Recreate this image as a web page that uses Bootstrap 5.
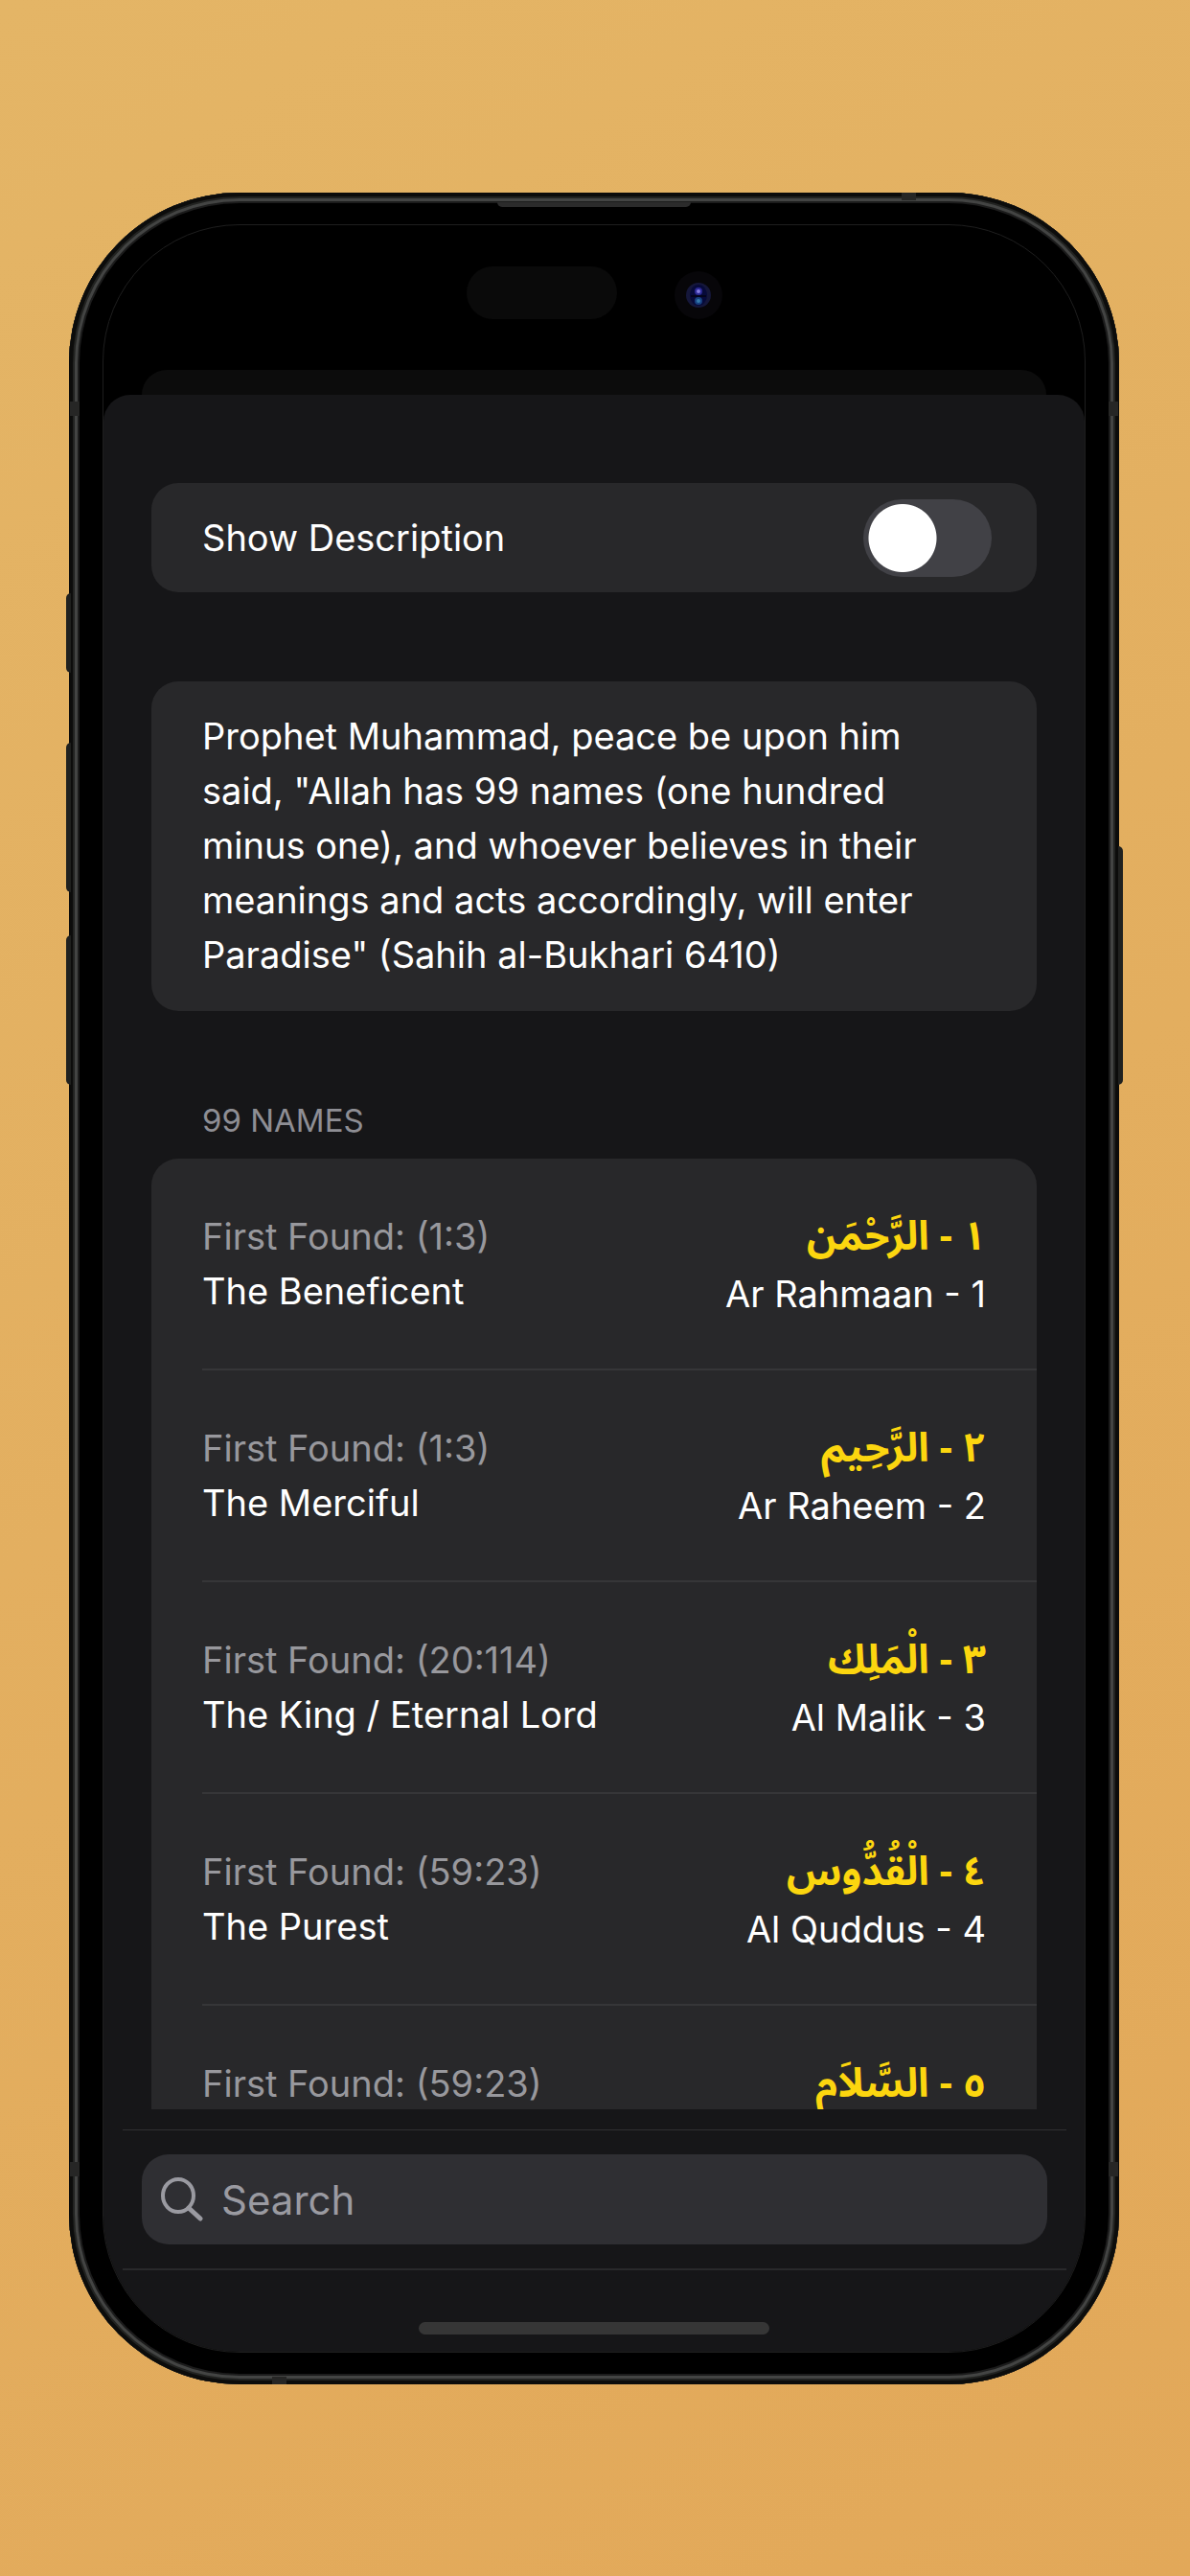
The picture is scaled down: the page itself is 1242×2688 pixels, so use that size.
<!DOCTYPE html>
<html lang="en">
<head>
<meta charset="utf-8">
<meta name="viewport" content="width=device-width, initial-scale=1">
<title>99 Names</title>
<link href="https://cdn.jsdelivr.net/npm/bootstrap@5.3.0/dist/css/bootstrap.min.css" rel="stylesheet">
<style>
  body { font-family: Inter, "Liberation Sans", sans-serif; font-size: 38px; line-height: 57px; color: #fff; background: linear-gradient(145deg, #e4b566, #e2a859); }
  .stage { padding: 201px 74px 200px 72px; }
  .phone { padding: 34px 36px; border-radius: 178px; background: #000;
    box-shadow: inset 0 0 0 4px #0c0c0b, inset 0 0 0 6px #222321, inset 0 0 0 9px #434443, inset 0 0 0 11px #1c1c1c; }
  .side-key { position: absolute; width: 5px; background: #20211f; }
  .key-left { left: -3px; border-radius: 5px 0 0 5px; }
  .key-right { right: -4px; border-radius: 0 5px 5px 0; top: 682px; height: 249px; }
  .key-action { top: 418px; height: 83px; }
  .key-up { top: 574px; height: 156px; }
  .key-down { top: 775px; height: 156px; }
  .band { position: absolute; background: #262625; }
  .band-side { width: 10px; height: 15px; }
  .band-end { width: 15px; height: 8px; }
  .b-l { left: 1px; } .b-r { right: 1px; } .b-hi { top: 218px; } .b-lo { bottom: 217px; }
  .b-top { top: 0; right: 212px; } .b-bot { bottom: 0; left: 212px; }
  .earpiece { position: absolute; top: 10px; left: 50%; margin-left: -101px; width: 202px; height: 5px; background: #2b2b2b; border-radius: 0 0 6px 6px; }
  .screen { border-radius: 142px; background: #000; }
  .screen-edge { position: absolute; inset: -1px; border: 1px solid #1e1e1e; border-radius: 143px; pointer-events: none; }
  .status { height: 151px; padding-top: 43px; gap: 60px; }
  .sensor { width: 157px; height: 55px; border-radius: 28px; background: #0a0a0a; }
  .back-sheet { height: 26px; margin: 0 40px; border-radius: 26px 26px 0 0; background: #0c0c0c; }
  .sheet { background: #161618; border-radius: 28px 28px 0 0; }
  .scroller { padding: 92px 50px 0; }
  .panel { background: #28282a; border-radius: 28px; padding: 0 53px; }
  .toggle-row { height: 114px; padding-right: 47px; margin-bottom: 93px; }
  .form-switch .form-check-input.ios { width: 134px; height: 81px; margin: 0; border: 0; border-radius: 41px; background-color: #414146;
    background-image: radial-gradient(circle closest-side at 41px 50%, #fff 35px, transparent 36px); background-size: 100% 100%; background-position: 0 0; }
  .form-switch .form-check-input.ios:checked { background-color: #34c759; background-image: radial-gradient(circle closest-side at 93px 50%, #fff 35px, transparent 36px); }
  .quote { padding: 29px 53px 30px; margin-bottom: 90px; }
  .section-head { font-size: 33px; line-height: 48px; color: #8e8e94; padding: 0 53px; margin-bottom: 16px; font-weight: 400; }
  .names { padding-right: 0; }
  .name-row { height: 221px; padding: 53px 53px 0 0; border-bottom: 2px solid #363638; }
  .name-row:last-child { border-bottom: 0; }
  .found { color: #98989d; }
  .arabic { font-family: "Noto Sans Arabic", "DejaVu Sans", sans-serif; font-weight: 700; color: #fcd60f; font-size: 42px; }
  .translit { padding-top: 3px; }
  .search-bar { margin: 21px 19px 0 20px; padding: 25px 20px; border-top: 1px solid #303032; border-bottom: 2px solid #29292b; }
  .search-box { height: 94px; border-radius: 28px; background: #2f2f33; padding: 0 20px; gap: 19px; }
  .search-box input, .search-box input:focus { background: transparent; border: 0; box-shadow: none; color: #fff; padding: 0; font-size: 42px; line-height: 57px; }
  .search-box input::placeholder { color: #9a9aa1; opacity: 1; }
  .home { height: 85px; padding-top: 54px; }
  .home-bar { width: 366px; height: 13px; border-radius: 7px; background: #363636; }
</style>
</head>
<body>
<main class="stage vh-100 d-flex">
  <div class="phone flex-grow-1 d-flex position-relative">
    <span class="side-key key-left key-action"></span>
    <span class="side-key key-left key-up"></span>
    <span class="side-key key-left key-down"></span>
    <span class="side-key key-right"></span>
    <span class="band band-side b-l b-hi"></span>
    <span class="band band-side b-r b-hi"></span>
    <span class="band band-side b-l b-lo"></span>
    <span class="band band-side b-r b-lo"></span>
    <span class="band band-end b-top"></span>
    <span class="band band-end b-bot"></span>
    <span class="earpiece"></span>
    <div class="position-relative flex-grow-1 d-flex">
      <div class="screen flex-grow-1 d-flex flex-column overflow-hidden">
        <div class="status flex-shrink-0 d-flex align-items-start justify-content-center">
          <div class="sensor"></div>
          <svg width="50" height="60" viewBox="0 0 50 60" aria-hidden="true">
            <circle cx="25" cy="30" r="25" fill="#070609"/>
            <circle cx="25" cy="30" r="13" fill="#15173a"/>
            <ellipse cx="25" cy="30" rx="9" ry="11" fill="#070a3a"/>
            <circle cx="25" cy="26" r="4" fill="#2d2a96"/>
            <circle cx="25" cy="26" r="2" fill="#857de0"/>
            <circle cx="25" cy="36" r="4" fill="#17407f"/>
            <circle cx="25" cy="36" r="2" fill="#3579ab"/>
            <rect x="17" y="30" width="16" height="2" fill="#04041c"/>
          </svg>
        </div>
        <div class="back-sheet flex-shrink-0"></div>
        <div class="sheet flex-fill d-flex flex-column overflow-hidden">
          <div class="scroller flex-fill overflow-hidden">
            <div class="panel toggle-row form-switch d-flex align-items-center justify-content-between">
              <label for="showDescription">Show Description</label>
              <input class="form-check-input ios" type="checkbox" role="switch" id="showDescription">
            </div>
            <p class="panel quote">Prophet Muhammad, peace be upon him said, "Allah has 99 names (one hundred minus one), and whoever believes in their meanings and acts accordingly, will enter Paradise" (Sahih al-Bukhari 6410)</p>
            <h2 class="section-head">99 NAMES</h2>
            <ul class="panel names list-unstyled mb-0">
              <li class="name-row d-flex justify-content-between">
                <div><div class="found">First Found: (1:3)</div><div>The Beneficent</div></div>
                <div class="text-end"><div class="arabic" dir="rtl" lang="ar">١ - الرَّحْمَن</div><div class="translit">Ar Rahmaan - 1</div></div>
              </li>
              <li class="name-row d-flex justify-content-between">
                <div><div class="found">First Found: (1:3)</div><div>The Merciful</div></div>
                <div class="text-end"><div class="arabic" dir="rtl" lang="ar">٢ - الرَّحِيم</div><div class="translit">Ar Raheem - 2</div></div>
              </li>
              <li class="name-row d-flex justify-content-between">
                <div><div class="found">First Found: (20:114)</div><div>The King / Eternal Lord</div></div>
                <div class="text-end"><div class="arabic" dir="rtl" lang="ar">٣ - الْمَلِك</div><div class="translit">Al Malik - 3</div></div>
              </li>
              <li class="name-row d-flex justify-content-between">
                <div><div class="found">First Found: (59:23)</div><div>The Purest</div></div>
                <div class="text-end"><div class="arabic" dir="rtl" lang="ar">٤ - الْقُدُّوس</div><div class="translit">Al Quddus - 4</div></div>
              </li>
              <li class="name-row d-flex justify-content-between">
                <div><div class="found">First Found: (59:23)</div></div>
                <div class="text-end"><div class="arabic" dir="rtl" lang="ar">٥ - السَّلاَم</div></div>
              </li>
            </ul>
          </div>
          <form class="search-bar flex-shrink-0" role="search">
            <div class="search-box d-flex align-items-center">
              <svg class="flex-shrink-0" width="44" height="46" viewBox="0 0 44 46" fill="none" stroke="#9a9aa1" stroke-width="4" stroke-linecap="round" aria-hidden="true">
                <ellipse cx="18" cy="19" rx="16" ry="17"/><path d="M29 32 41 43" stroke-width="5"/>
              </svg>
              <input class="form-control" type="search" placeholder="Search" aria-label="Search">
            </div>
          </form>
          <div class="home flex-shrink-0 d-flex justify-content-center"><div class="home-bar"></div></div>
        </div>
      </div>
      <div class="screen-edge"></div>
    </div>
  </div>
</main>
<script src="https://cdn.jsdelivr.net/npm/bootstrap@5.3.0/dist/js/bootstrap.bundle.min.js"></script>
</body>
</html>
